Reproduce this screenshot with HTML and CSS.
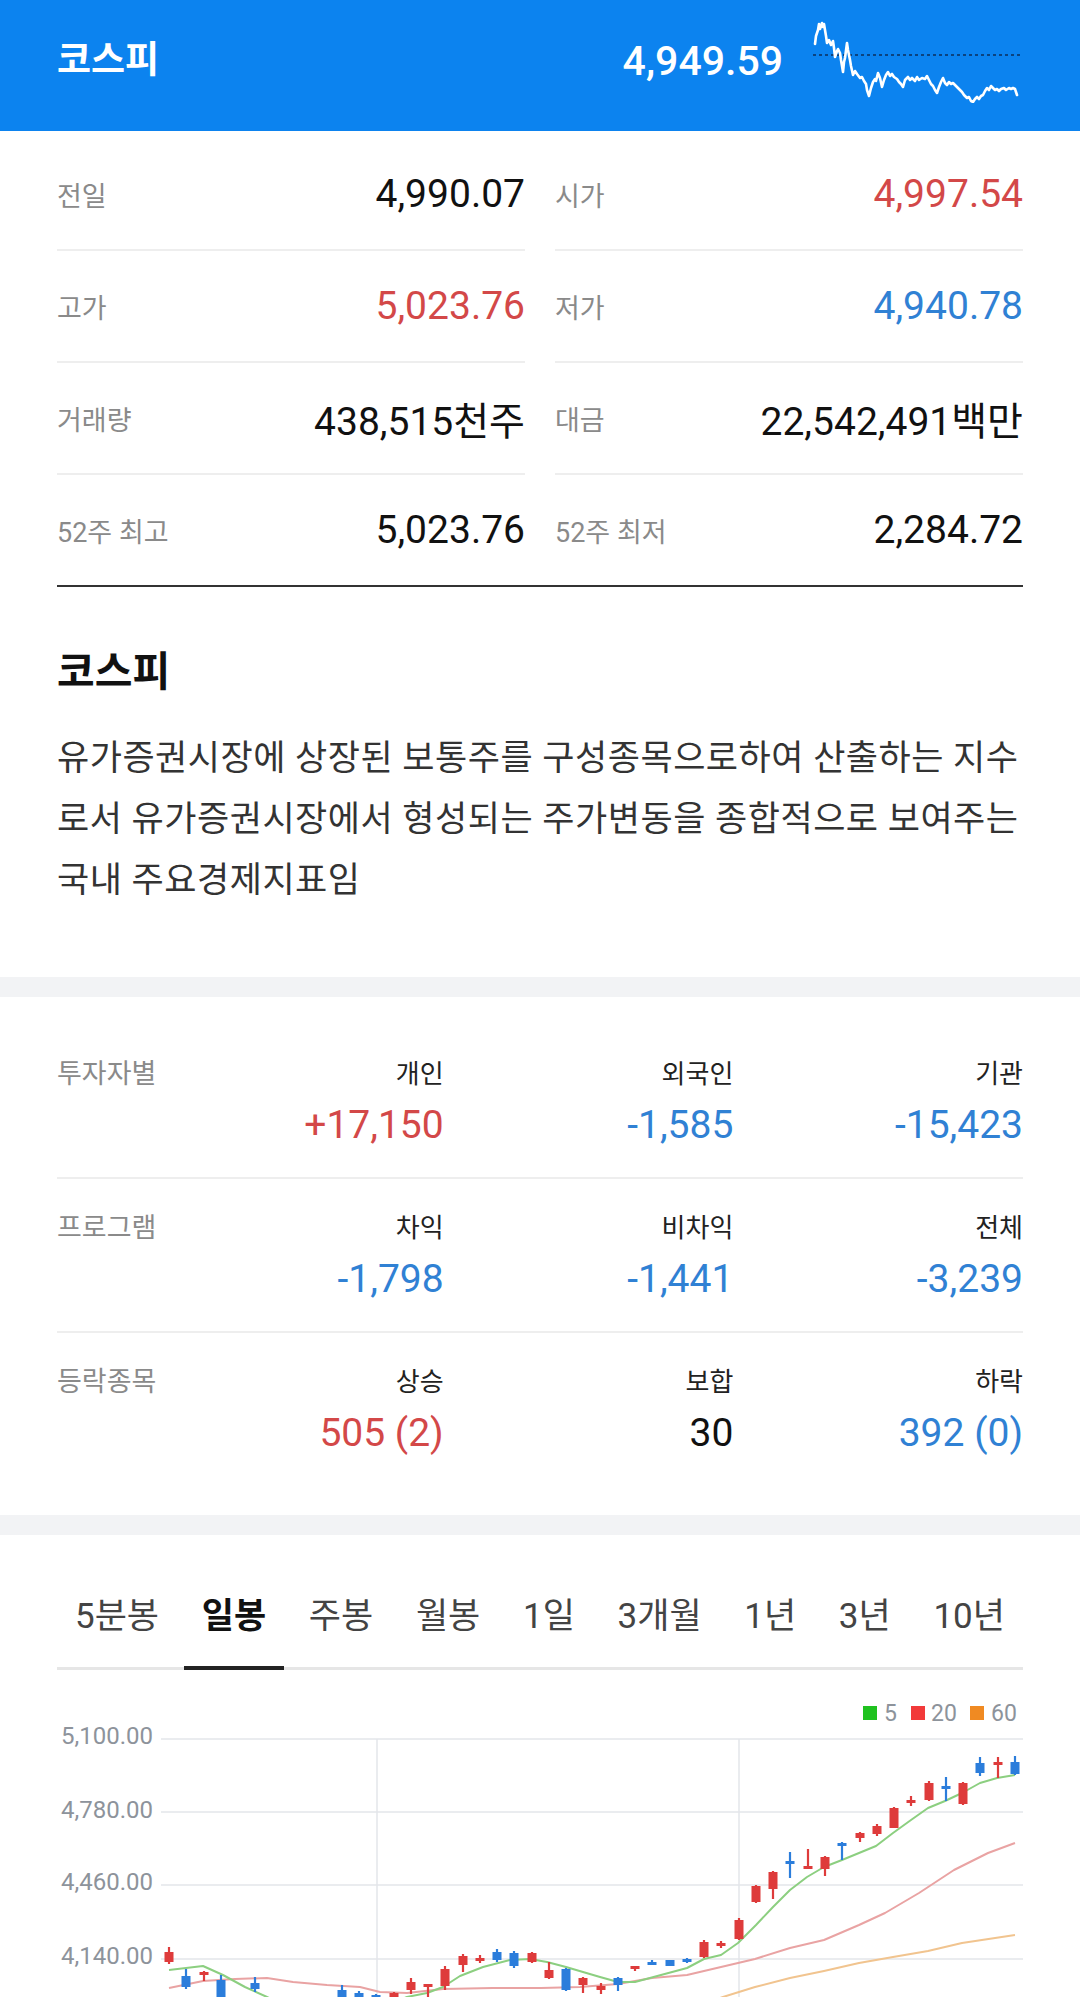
FILE: index.html
```html
<!DOCTYPE html>
<html lang="ko">
<head>
<meta charset="utf-8">
<title>코스피</title>
<link rel="stylesheet" href="styles.css">
</head>
<body>
<header class="top">
  <h1 class="top-title">코스피</h1>
  <div class="top-price">4,949.59</div>
  <svg class="spark" width="210" height="84" viewBox="813 19 210 84">
    <line x1="813" y1="55" x2="1022" y2="55" class="spark-base"/>
    <polyline class="spark-line" points="815,44 816,36 818,30 819,24 820,29 822,23 823,27 824,24 826,36 827,43 829,40 831,45 833,41 834,48 835,57 837,51 838,49 840,53 841,60 843,72 844,62 845,58 847,43 848,50 850,60 851,66 853,75 855,71 857,74 860,78 862,77 864,81 866,84 867,90 869,96 871,88 873,82 875,79 876,81 878,73 880,78 882,87 884,80 886,75 888,72 890,76 892,74 894,77 897,79 899,82 901,84 903,87 905,80 908,77 910,80 912,78 915,81 917,77 919,80 922,78 925,79 927,76 929,80 931,84 933,86 935,90 937,93 939,87 941,82 943,78 945,83 947,85 949,82 951,84 953,83 956,86 958,88 960,90 962,92 964,95 967,98 969,97 971,101 973,102 975,99 977,97 979,99 981,96 983,95 985,91 987,88 989,90 991,86 993,88 995,90 997,89 999,91 1001,89 1004,88 1006,90 1009,88 1011,89 1013,88 1015,89 1017,95"/>
  </svg>
</header>

<section class="stats">
  <div class="cell"><span class="lbl">전일</span><span class="val">4,990.07</span></div>
  <div class="cell"><span class="lbl">시가</span><span class="val up">4,997.54</span></div>
  <div class="cell"><span class="lbl">고가</span><span class="val up">5,023.76</span></div>
  <div class="cell"><span class="lbl">저가</span><span class="val down">4,940.78</span></div>
  <div class="cell"><span class="lbl">거래량</span><span class="val">438,515천주</span></div>
  <div class="cell"><span class="lbl">대금</span><span class="val">22,542,491백만</span></div>
  <div class="cell last"><span class="lbl">52주 최고</span><span class="val">5,023.76</span></div>
  <div class="cell last"><span class="lbl">52주 최저</span><span class="val">2,284.72</span></div>
</section>

<section class="desc">
  <h2 class="desc-title">코스피</h2>
  <p class="desc-text">유가증권시장에 상장된 보통주를 구성종목으로하여 산출하는 지수로서 유가증권시장에서 형성되는 주가변동을 종합적으로 보여주는 국내 주요경제지표임</p>
</section>

<div class="band"></div>

<section class="inv">
  <div class="inv-row">
    <div class="inv-lbl">투자자별</div>
    <div class="inv-col"><div class="inv-head">개인</div><div class="inv-val up">+17,150</div></div>
    <div class="inv-col"><div class="inv-head">외국인</div><div class="inv-val down">-1,585</div></div>
    <div class="inv-col"><div class="inv-head">기관</div><div class="inv-val down">-15,423</div></div>
  </div>
  <div class="inv-row">
    <div class="inv-lbl">프로그램</div>
    <div class="inv-col"><div class="inv-head">차익</div><div class="inv-val down">-1,798</div></div>
    <div class="inv-col"><div class="inv-head">비차익</div><div class="inv-val down">-1,441</div></div>
    <div class="inv-col"><div class="inv-head">전체</div><div class="inv-val down">-3,239</div></div>
  </div>
  <div class="inv-row last">
    <div class="inv-lbl">등락종목</div>
    <div class="inv-col"><div class="inv-head">상승</div><div class="inv-val up">505 (2)</div></div>
    <div class="inv-col"><div class="inv-head">보합</div><div class="inv-val">30</div></div>
    <div class="inv-col"><div class="inv-head">하락</div><div class="inv-val down">392 (0)</div></div>
  </div>
</section>

<div class="band"></div>

<nav class="tabs">
  <span class="tab">5분봉</span>
  <span class="tab active">일봉</span>
  <span class="tab">주봉</span>
  <span class="tab">월봉</span>
  <span class="tab">1일</span>
  <span class="tab">3개월</span>
  <span class="tab">1년</span>
  <span class="tab">3년</span>
  <span class="tab">10년</span>
</nav>

<svg class="chart" width="1080" height="327" viewBox="0 1670 1080 327">
  <g class="grid">
    <line x1="161" y1="1739" x2="1023" y2="1739"/>
    <line x1="161" y1="1812" x2="1023" y2="1812"/>
    <line x1="161" y1="1885" x2="1023" y2="1885"/>
    <line x1="161" y1="1959" x2="1023" y2="1959"/>
    <line x1="377" y1="1739" x2="377" y2="2000"/>
    <line x1="739" y1="1739" x2="739" y2="2000"/>
  </g>
  <g class="ylbl">
    <text x="153" y="1744">5,100.00</text>
    <text x="153" y="1818">4,780.00</text>
    <text x="153" y="1890">4,460.00</text>
    <text x="153" y="1964">4,140.00</text>
  </g>
  <g class="legend">
    <rect x="863" y="1706" width="14" height="14" fill="#1fc21f"/>
    <text x="884" y="1721">5</text>
    <rect x="911" y="1706" width="14" height="14" fill="#f23a3a"/>
    <text x="931" y="1721">20</text>
    <rect x="970" y="1706" width="14" height="14" fill="#f08a22"/>
    <text x="991" y="1721">60</text>
  </g>
  <polyline class="ma60" points="690,2008 723,1997 755,1987 790,1978 824,1971 859,1963 893,1957 928,1951 962,1943 1015,1935"/>
  <polyline class="ma20" points="169,1988 203,1981 235,1979 267,1978 293,1982 327,1985 360,1987 380,1992 407,1993 443,1989 493,1988 541,1988 580,1987 618,1984 652,1978 687,1975 721,1967 755,1959 790,1948 824,1940 859,1925 885,1913 919,1893 954,1870 988,1853 1015,1843"/>
  <polyline class="ma5" points="169,1970 203,1966 223,1975 245,1987 267,1997 290,2008 380,2008 407,1997 427,1993 443,1987 460,1976 483,1967 510,1960 530,1959 547,1962 566,1967 600,1977 618,1982 635,1982 661,1975 687,1968 704,1959 721,1955 738,1943 756,1925 773,1907 790,1890 807,1877 824,1867 842,1860 859,1853 876,1846 893,1833 911,1820 928,1808 945,1801 962,1793 980,1783 997,1778 1015,1775"/>
  <g class="c-up">
    <line x1="169" y1="1947" x2="169" y2="1964"/><rect x="164.5" y="1952" width="9" height="10"/>
    <line x1="204" y1="1971" x2="204" y2="1981"/><rect x="199.5" y="1972" width="9" height="3"/>
    <line x1="394" y1="1992" x2="394" y2="2000"/><rect x="389.5" y="1993" width="9" height="7"/>
    <line x1="411" y1="1978" x2="411" y2="1994"/><rect x="406.5" y="1982" width="9" height="8"/>
    <line x1="428" y1="1984" x2="428" y2="1997"/><rect x="423.5" y="1984" width="9" height="3"/>
    <line x1="445" y1="1966" x2="445" y2="1990"/><rect x="440.5" y="1969" width="9" height="17"/>
    <line x1="463" y1="1954" x2="463" y2="1972"/><rect x="458.5" y="1956" width="9" height="9"/>
    <line x1="480" y1="1955" x2="480" y2="1963"/><rect x="475.5" y="1958" width="9" height="3"/>
    <line x1="532" y1="1952" x2="532" y2="1963"/><rect x="527.5" y="1953" width="9" height="9"/>
    <line x1="549" y1="1962" x2="549" y2="1979"/><rect x="544.5" y="1970" width="9" height="8"/>
    <line x1="583" y1="1977" x2="583" y2="1993"/><rect x="578.5" y="1978" width="9" height="7"/>
    <line x1="601" y1="1983" x2="601" y2="1994"/><rect x="596.5" y="1986" width="9" height="4"/>
    <line x1="635" y1="1966" x2="635" y2="1971"/><rect x="630.5" y="1966" width="9" height="3"/>
    <line x1="704" y1="1940" x2="704" y2="1958"/><rect x="699.5" y="1942" width="9" height="15"/>
    <line x1="721" y1="1941" x2="721" y2="1948"/><rect x="716.5" y="1943" width="9" height="3"/>
    <line x1="739" y1="1918" x2="739" y2="1940"/><rect x="734.5" y="1920" width="9" height="19"/>
    <line x1="756" y1="1885" x2="756" y2="1903"/><rect x="751.5" y="1886" width="9" height="16"/>
    <line x1="773" y1="1871" x2="773" y2="1899"/><rect x="768.5" y="1872" width="9" height="17"/>
    <line x1="808" y1="1849" x2="808" y2="1869"/><rect x="803.5" y="1866" width="9" height="3"/>
    <line x1="825" y1="1856" x2="825" y2="1876"/><rect x="820.5" y="1857" width="9" height="12"/>
    <line x1="860" y1="1832" x2="860" y2="1842"/><rect x="855.5" y="1833" width="9" height="5"/>
    <line x1="877" y1="1824" x2="877" y2="1836"/><rect x="872.5" y="1826" width="9" height="8"/>
    <line x1="894" y1="1807" x2="894" y2="1828"/><rect x="889.5" y="1808" width="9" height="20"/>
    <line x1="911" y1="1796" x2="911" y2="1806"/><rect x="906.5" y="1800" width="9" height="3"/>
    <line x1="929" y1="1781" x2="929" y2="1801"/><rect x="924.5" y="1783" width="9" height="17"/>
    <line x1="963" y1="1782" x2="963" y2="1805"/><rect x="958.5" y="1783" width="9" height="21"/>
    <line x1="998" y1="1757" x2="998" y2="1778"/><rect x="993.5" y="1762" width="9" height="3"/>
  </g>
  <g class="c-down">
    <line x1="186" y1="1969" x2="186" y2="1989"/><rect x="181.5" y="1976" width="9" height="11"/>
    <line x1="221" y1="1975" x2="221" y2="2000"/><rect x="216.5" y="1980" width="9" height="20"/>
    <line x1="255" y1="1977" x2="255" y2="1992"/><rect x="250.5" y="1983" width="9" height="6"/>
    <line x1="342" y1="1985" x2="342" y2="2000"/><rect x="337.5" y="1990" width="9" height="10"/>
    <line x1="359" y1="1991" x2="359" y2="2000"/><rect x="354.5" y="1993" width="9" height="7"/>
    <line x1="376" y1="1994" x2="376" y2="2000"/><rect x="371.5" y="1995" width="9" height="5"/>
    <line x1="497" y1="1949" x2="497" y2="1962"/><rect x="492.5" y="1952" width="9" height="8"/>
    <line x1="514" y1="1951" x2="514" y2="1968"/><rect x="509.5" y="1953" width="9" height="13"/>
    <line x1="566" y1="1968" x2="566" y2="1991"/><rect x="561.5" y="1969" width="9" height="21"/>
    <line x1="618" y1="1977" x2="618" y2="1991"/><rect x="613.5" y="1978" width="9" height="7"/>
    <line x1="652" y1="1960" x2="652" y2="1965"/><rect x="647.5" y="1962" width="9" height="3"/>
    <line x1="670" y1="1960" x2="670" y2="1966"/><rect x="665.5" y="1960" width="9" height="6"/>
    <line x1="687" y1="1958" x2="687" y2="1963"/><rect x="682.5" y="1959" width="9" height="3"/>
    <line x1="790" y1="1852" x2="790" y2="1878"/><rect x="785.5" y="1861" width="9" height="3"/>
    <line x1="842" y1="1842" x2="842" y2="1860"/><rect x="837.5" y="1843" width="9" height="3"/>
    <line x1="946" y1="1777" x2="946" y2="1801"/><rect x="941.5" y="1786" width="9" height="3"/>
    <line x1="980" y1="1757" x2="980" y2="1776"/><rect x="975.5" y="1763" width="9" height="10"/>
    <line x1="1015" y1="1756" x2="1015" y2="1775"/><rect x="1010.5" y="1762" width="9" height="12"/>
  </g>
</svg>
</body>
</html>
```

FILE: styles.css
```css
* { box-sizing: border-box; }

html, body {
  margin: 0;
  padding: 0;
  background: #ffffff;
}

body {
  font-family: Roboto, "Noto Sans CJK KR", "Noto Sans", sans-serif;
  color: #111111;
  overflow: hidden;
}

/* ---------- header ---------- */
.top {
  height: 131px;
  background: #0c83ef;
  display: flex;
  align-items: center;
  padding: 0 57px 10px;
}

.top-title {
  margin: 0;
  font-size: 37px;
  font-weight: 700;
  color: #ffffff;
  line-height: 44px;
}

.top-price {
  margin-left: auto;
  font-size: 41px;
  font-weight: 500;
  color: #ffffff;
  line-height: 50px;
}

.spark {
  display: block;
  margin-left: 30px;
}

.spark-base {
  stroke: #0b2f5c;
  stroke-width: 1.6;
  stroke-dasharray: 3 3;
}

.spark-line {
  fill: none;
  stroke: #ffffff;
  stroke-width: 2.6;
  stroke-linejoin: round;
  stroke-linecap: round;
}

/* ---------- stats ---------- */
.stats {
  margin: 0 57px;
  padding-top: 8px;
  display: grid;
  grid-template-columns: 1fr 1fr;
  column-gap: 30px;
  border-bottom: 2px solid #333333;
}

.cell {
  height: 112px;
  display: flex;
  align-items: center;
  justify-content: space-between;
  border-bottom: 2px solid #eeeeee;
}

.cell.last {
  height: 110px;
  border-bottom: none;
}

.lbl {
  font-size: 27px;
  color: #8a8a8a;
}

.val {
  font-size: 39px;
  color: #111111;
}

.up { color: #d34848; }
.down { color: #3081d4; }

/* ---------- description ---------- */
.desc {
  padding: 60px 57px 66px;
}

.desc-title {
  margin: 0;
  font-size: 41px;
  font-weight: 700;
  line-height: 50px;
  color: #111111;
}

.desc-text {
  margin: 31px 0 0;
  font-size: 35px;
  letter-spacing: 0.5px;
  line-height: 61px;
  color: #333333;
}

.band {
  height: 20px;
  background: #f2f3f5;
}

/* ---------- investors ---------- */
.inv {
  padding: 28px 57px 30px;
}

.inv-row {
  display: grid;
  grid-template-columns: 97px 1fr 1fr 1fr;
  padding: 33px 0 27px;
  border-bottom: 2px solid #eeeeee;
}

.inv-row.last {
  border-bottom: none;
}

.inv-lbl {
  font-size: 27px;
  line-height: 32px;
  color: #8a8a8a;
  white-space: nowrap;
}

.inv-col {
  text-align: right;
}

.inv-head {
  font-size: 26px;
  line-height: 32px;
  color: #222222;
}

.inv-val {
  margin-top: 10px;
  font-size: 39px;
  line-height: 50px;
  color: #111111;
}

.inv-val.up { color: #d34848; }
.inv-val.down { color: #3081d4; }

/* ---------- tabs ---------- */
.tabs {
  margin: 0 57px;
  padding-top: 60px;
  display: flex;
  justify-content: space-between;
  border-bottom: 3px solid #e6e6e6;
}

.tab {
  padding: 0 18px 27px;
  font-size: 35px;
  line-height: 44px;
  color: #444444;
  border-bottom: 4px solid transparent;
  margin-bottom: -3px;
  white-space: nowrap;
}

.tab.active {
  color: #111111;
  font-weight: 700;
  border-bottom-color: #222222;
}

/* ---------- chart ---------- */
.chart {
  display: block;
}

.grid line {
  stroke: #e3e6ea;
  stroke-width: 1.5;
}

.ylbl text {
  font-family: Roboto, sans-serif;
  font-size: 24px;
  fill: #8d939b;
  text-anchor: end;
}

.legend text {
  font-family: Roboto, sans-serif;
  font-size: 23px;
  fill: #8d939b;
}

.ma5, .ma20, .ma60 {
  fill: none;
  stroke-width: 2;
  stroke-linejoin: round;
}

.ma5 { stroke: #8ccf80; }
.ma20 { stroke: #e9a3a3; }
.ma60 { stroke: #f1c48f; }

.c-up line, .c-down line { stroke-width: 2.2; }
.c-up line { stroke: #de3b3b; }
.c-up rect { fill: #de3b3b; }
.c-down line { stroke: #2b7ddb; }
.c-down rect { fill: #2b7ddb; }
```
